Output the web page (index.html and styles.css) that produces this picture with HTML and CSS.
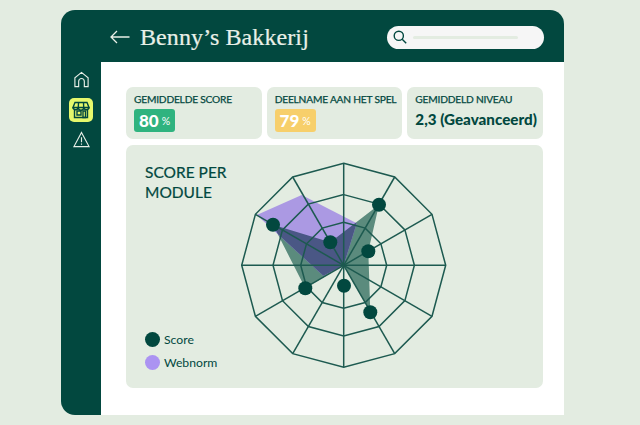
FILE: index.html
```html
<!DOCTYPE html>
<html lang="nl">
<head>
  <meta charset="UTF-8">
  <meta name="viewport" content="width=device-width, initial-scale=1.0">
  <title>Benny's Bakkerij</title>
  <link rel="stylesheet" href="styles.css">
</head>
<body>
  <div class="app">
    <header class="topbar">
      <div class="topbar-title">
        <svg class="back-icon" viewBox="0 0 20 14" aria-hidden="true">
          <path d="M19.5 7H1M7 1 1 7l6 6"/>
        </svg>
        <h1>Benny’s Bakkerij</h1>
      </div>
      <div class="search">
        <svg class="search-icon" viewBox="0 0 14 14" aria-hidden="true">
          <circle cx="5.8" cy="5.8" r="4.6"/>
          <path d="m9.2 9.2 4 4"/>
        </svg>
        <span class="search-line"></span>
      </div>
    </header>

    <nav class="sidebar">
      <svg class="nav-icon" viewBox="0 0 18 18" aria-hidden="true">
        <path d="M2 16.5V7.2L9 1.5l7 5.7v9.3h-4V11a3 3 0 0 0-6 0v5.5z"/>
      </svg>
      <div class="nav-active">
        <svg class="store-icon" viewBox="0 0 18 18" aria-hidden="true">
          <path d="M3 1.5h12l2 5H1z"/>
          <path d="M1 6.5a2.7 2.7 0 0 0 5.3 0 2.7 2.7 0 0 0 5.4 0 2.7 2.7 0 0 0 5.3 0M2.5 9v7.5h13V9"/>
          <path d="M6.5 1.5 6.3 6.5M11.5 1.5l.2 5"/>
          <path d="M5 10h4v4H5zM11 10h2.5v6.5H11z"/>
        </svg>
      </div>
      <svg class="nav-icon" viewBox="0 0 18 18" aria-hidden="true">
        <path d="M9 1.5 17 16.5H1zM9 6.5v5.5M9 13.3v1.2"/>
      </svg>
    </nav>

    <main class="content">
      <section class="stats">
        <div class="stat">
          <div class="stat-label">GEMIDDELDE SCORE</div>
          <div class="badge badge-green">80<small>%</small></div>
        </div>
        <div class="stat">
          <div class="stat-label">DEELNAME AAN HET SPEL</div>
          <div class="badge badge-yellow">79<small>%</small></div>
        </div>
        <div class="stat">
          <div class="stat-label">GEMIDDELD NIVEAU</div>
          <div class="stat-value">2,3 (Geavanceerd)</div>
        </div>
      </section>

      <section class="panel">
        <div class="panel-side">
          <h2>SCORE PER<br>MODULE</h2>
          <ul class="legend">
            <li><span class="dot dot-score"></span>Score</li>
            <li><span class="dot dot-norm"></span>Webnorm</li>
          </ul>
        </div>
        <svg class="radar" id="radar" viewBox="238 159 212 212" aria-label="Score per module"></svg>
      </section>
    </main>
  </div>

  <script src="radar.js"></script>
</body>
</html>
```

FILE: styles.css
```css
:root {
  --dark-green: #02483f;
  --pale-green: #e3ece1;
  --line-green: #1d5a50;
}

* {
  margin: 0;
  padding: 0;
  box-sizing: border-box;
}

body {
  font-family: Lato, "Liberation Sans", sans-serif;
  background-color: var(--pale-green);
  color: var(--dark-green);
  padding: 10px 0 0 61px;
}

.app {
  display: grid;
  grid-template-columns: 40px 1fr;
  grid-template-rows: 52px 1fr;
  width: 503px;
  height: 405px;
  background-color: var(--dark-green);
  border-radius: 14px 14px 0 14px;
  overflow: hidden;
}

/* top bar */
.topbar {
  grid-column: 1 / 3;
  display: flex;
  align-items: center;
  justify-content: space-between;
  padding: 2px 20px 0 49px;
}

.topbar-title {
  display: flex;
  align-items: center;
  gap: 10px;
}

.back-icon {
  width: 20px;
  height: 14px;
  fill: none;
  stroke: #e9f0e8;
  stroke-width: 1.3;
}

h1 {
  font-family: "Liberation Serif", serif;
  font-size: 24px;
  font-weight: 400;
  letter-spacing: 0.1px;
  color: #e9f0e8;
  -webkit-text-stroke: 0.2px #e9f0e8;
}

.search {
  display: flex;
  align-items: center;
  gap: 6px;
  width: 157px;
  height: 23px;
  padding-left: 6px;
  border-radius: 12px;
  background-color: #f6f6f6;
}

.search-icon {
  width: 14px;
  height: 14px;
  fill: none;
  stroke: var(--dark-green);
  stroke-width: 1.4;
}

.search-line {
  width: 105px;
  height: 3px;
  border-radius: 2px;
  background-color: var(--pale-green);
}

/* sidebar */
.sidebar {
  display: flex;
  flex-direction: column;
  align-items: center;
  padding-top: 9px;
  gap: 9px;
}

.nav-icon {
  width: 17px;
  height: 17px;
  fill: none;
  stroke: #e9f0e8;
  stroke-width: 1.2;
}

.nav-active {
  display: flex;
  align-items: center;
  justify-content: center;
  width: 24px;
  height: 24px;
  margin-top: 1px;
  border-radius: 5px;
  background-color: #e6f86c;
}

.store-icon {
  width: 18px;
  height: 18px;
  fill: none;
  stroke: var(--dark-green);
  stroke-width: 1.4;
}

/* main area */
.content {
  background-color: #fff;
  padding: 25px 21px 27px 25px;
  display: flex;
  flex-direction: column;
  gap: 6px;
}

.stats {
  display: grid;
  grid-template-columns: repeat(3, minmax(0, 1fr));
  gap: 5px;
}

.stat {
  height: 52px;
  padding: 6px 8px;
  border-radius: 7px;
  background-color: var(--pale-green);
}

.stat-label {
  font-size: 10.2px;
  font-weight: 400;
  letter-spacing: -0.2px;
  line-height: 13px;
  white-space: nowrap;
  -webkit-text-stroke: 0.25px var(--dark-green);
}

.badge {
  display: inline-flex;
  align-items: center;
  justify-content: center;
  gap: 3px;
  width: 41px;
  height: 23px;
  margin-top: 3px;
  border-radius: 3px;
  color: #fff;
  font-size: 17px;
  font-weight: 900;
}

.badge small {
  font-size: 10.5px;
  font-weight: 400;
}

.badge-green {
  background-color: #2fb37f;
}

.badge-yellow {
  background-color: #f7cf6b;
}

.stat-value {
  margin-top: 2px;
  font-size: 15.2px;
  font-weight: 900;
  line-height: 22px;
  white-space: nowrap;
}

.panel {
  flex: 1;
  display: flex;
  padding: 14px 0 0 19px;
  border-radius: 7px;
  background-color: var(--pale-green);
}

.panel-side {
  width: 93px;
  height: 211px;
  display: flex;
  flex-direction: column;
  justify-content: space-between;
}

h2 {
  padding-top: 3px;
  font-size: 15.5px;
  font-weight: 400;
  line-height: 20px;
  -webkit-text-stroke: 0.2px var(--dark-green);
}

.legend {
  list-style: none;
  font-size: 12.2px;
  display: flex;
  flex-direction: column;
  gap: 8px;
}

.legend li {
  display: flex;
  align-items: center;
  gap: 4px;
}

.dot {
  width: 15px;
  height: 15px;
  border-radius: 50%;
}

.dot-score {
  background-color: var(--dark-green);
}

.dot-norm {
  background-color: #ab93f2;
}

.radar {
  width: 212px;
  height: 212px;
}

.radar-grid {
  fill: none;
  stroke: var(--line-green);
  stroke-width: 1.5;
}

.radar-score {
  fill: #5b8b7d;
}

.radar-norm {
  fill: #ab99e3;
}

.radar-overlap {
  fill: #4a5785;
}

.radar-dot {
  fill: var(--dark-green);
}
```

FILE: radar.js
```js
const radar = document.getElementById('radar');
const cx = 343.7;
const cy = 265.3;
const rings = [43, 70.7, 102];

// punten van de score, op de spaken van het web
const dots = [[379, 204.7], [368.3, 251.3], [370.3, 312.3], [344, 285.7], [305.3, 288.3], [273, 224.7], [330.3, 242.3]];
const scoreShape = [[379, 204.7], [368.3, 251.3], [370.3, 312.3], [cx, cy], [305.3, 288.3], [273, 224.7], [330.3, 242.3]];
const normShape = [[256.7, 215], [301.7, 195], [356.7, 223.3], [cx, cy], [323.3, 275.7]];

function pts(list) {
  return list.map(p => p.join(',')).join(' ');
}

function spoke(i, r) {
  const a = i * Math.PI / 6;
  return [(cx + r * Math.sin(a)).toFixed(1), (cy - r * Math.cos(a)).toFixed(1)];
}

let html = `<defs><clipPath id="score-clip"><polygon points="${pts(scoreShape)}"/></clipPath></defs>`;
html += `<polygon class="radar-score" points="${pts(scoreShape)}"/>`;
html += `<polygon class="radar-norm" points="${pts(normShape)}"/>`;
html += `<polygon class="radar-overlap" clip-path="url(#score-clip)" points="${pts(normShape)}"/>`;

rings.forEach(r => {
  const corners = [];
  for (let i = 0; i < 12; i++) corners.push(spoke(i, r));
  html += `<polygon class="radar-grid" points="${pts(corners)}"/>`;
});

for (let i = 0; i < 12; i++) {
  const end = spoke(i, rings[2]);
  html += `<line class="radar-grid" x1="${cx}" y1="${cy}" x2="${end[0]}" y2="${end[1]}"/>`;
}

dots.forEach(d => {
  html += `<circle class="radar-dot" cx="${d[0]}" cy="${d[1]}" r="7"/>`;
});

radar.innerHTML = html;
```
